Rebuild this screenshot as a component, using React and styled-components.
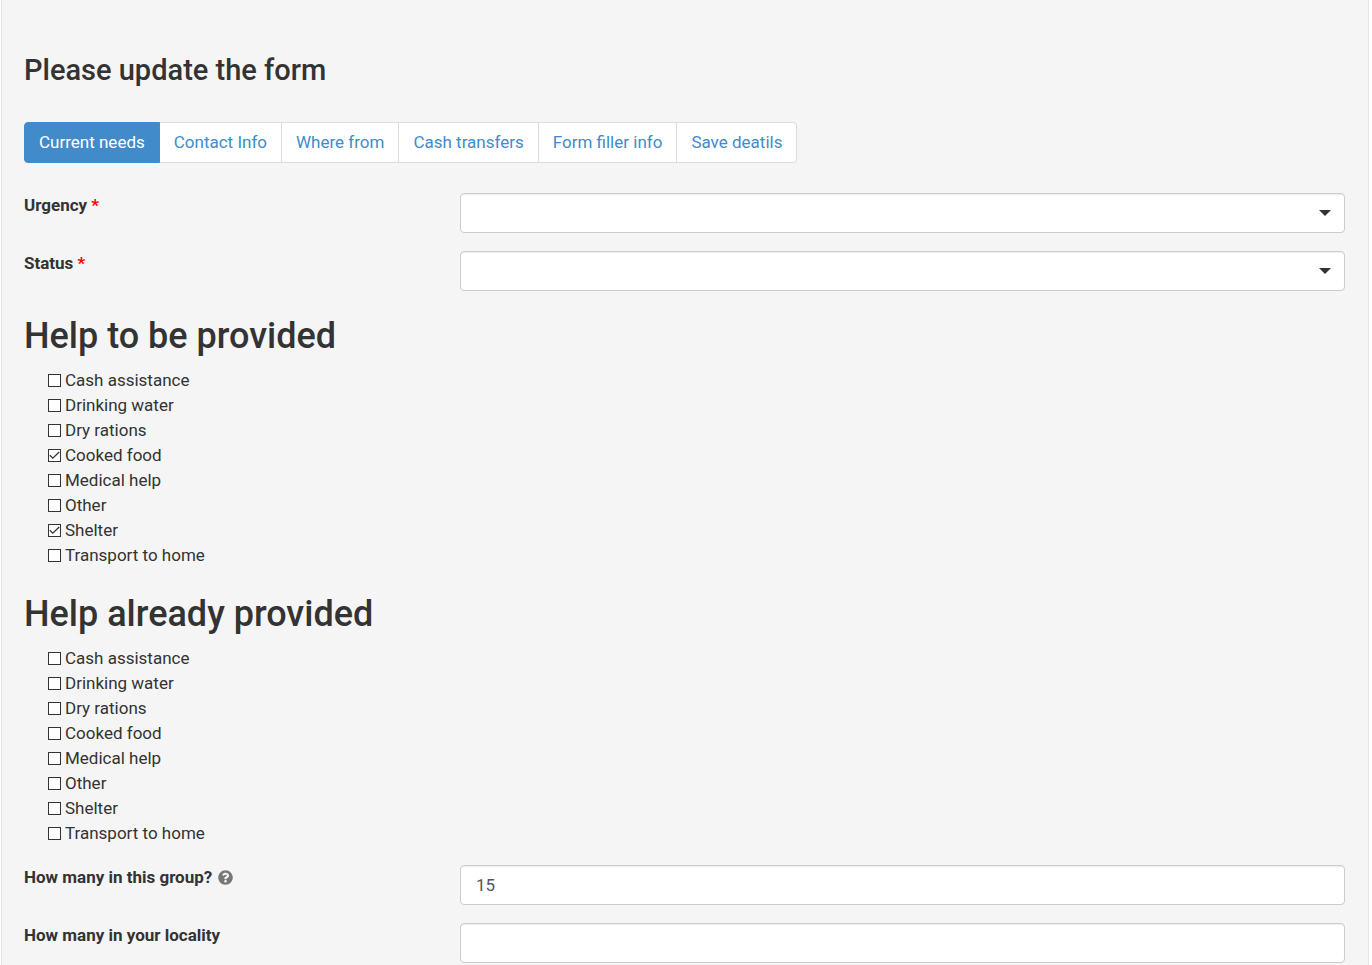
import React, { useState } from 'react';
import styled, { createGlobalStyle } from 'styled-components';
import { FaQuestionCircle } from 'react-icons/fa';

const GlobalStyle = createGlobalStyle`
  *, *::before, *::after { box-sizing: border-box; }
  body {
    margin: 0;
    background: #fff;
    color: #333;
    font-family: Roboto, "Liberation Sans", sans-serif;
    font-size: 17px;
    line-height: 25px;
  }
`;

const Panel = styled.main`
  min-height: 100vh;
  margin: 0 3px 0 1px;
  padding: 50px 23px 0 22px;
  background: #f5f5f5;
  border: solid #e3e3e3;
  border-width: 0 1px;
`;

const Title = styled.h2`
  margin: 0 0 32px;
  font-size: 29px;
  font-weight: 500;
  line-height: 40px;
`;

const SectionTitle = styled.h1`
  margin: 0 0 12px;
  font-size: 36px;
  font-weight: 500;
  line-height: 40px;
`;

const Tabs = styled.nav`
  display: flex;
  margin-bottom: 30px;
`;

const Tab = styled.a`
  padding: 7px 14px;
  border: 1px solid ${(p) => (p.$active ? '#428bca' : '#ddd')};
  background: ${(p) => (p.$active ? '#428bca' : '#fff')};
  color: ${(p) => (p.$active ? '#fff' : '#428bca')};
  text-decoration: none;

  & + & { border-left-width: 0; }
  &:first-child { border-radius: 4px 0 0 4px; }
  &:last-child { border-radius: 0 4px 4px 0; }
`;

const Field = styled.div`
  display: flex;
  align-items: flex-start;
  margin-bottom: 18px;
`;

const FieldLabel = styled.label`
  flex: 0 0 33%;
  font-weight: 700;
`;

const Required = styled.span`
  color: #f00;
`;

const HelpIcon = styled(FaQuestionCircle)`
  width: 15px;
  height: 15px;
  margin-left: 6px;
  color: #777;
  vertical-align: -2px;
`;

const Control = styled.div`
  position: relative;
  flex: 1;
`;

const Input = styled.input`
  display: block;
  width: 100%;
  height: 40px;
  padding: 6px 15px;
  border: 1px solid #ccc;
  border-radius: 4px;
  background: #fff;
  box-shadow: inset 0 1px 1px rgba(0, 0, 0, 0.075);
  color: #555;
  font: inherit;
  appearance: none;
`;

const Caret = styled.span`
  position: absolute;
  top: 17px;
  right: 14px;
  border: 6px solid transparent;
  border-top-color: #333;
  border-bottom-width: 0;
  pointer-events: none;
`;

const HelpGroup = styled.section`
  padding-top: 7px;
`;

const CheckList = styled.ul`
  margin: 0 0 19px;
  padding: 0 0 0 24px;
  list-style: none;
`;

const CheckLabel = styled.label`
  display: flex;
  align-items: center;
  gap: 4px;
`;

const CheckBox = styled.span`
  display: grid;
  width: 13px;
  height: 13px;

  input, svg { grid-area: 1 / 1; }
  input {
    width: 13px;
    height: 13px;
    margin: 0;
    border: 1px solid #333;
    background: #fff;
    appearance: none;
  }
  svg { display: none; pointer-events: none; }
  input:checked + svg { display: block; }
`;

const tabs = ['Current needs', 'Contact Info', 'Where from', 'Cash transfers', 'Form filler info', 'Save deatils'];
const helpTypes = [
  'Cash assistance', 'Drinking water', 'Dry rations', 'Cooked food',
  'Medical help', 'Other', 'Shelter', 'Transport to home',
];

function SelectField({ id, label }) {
  return (
    <Field>
      <FieldLabel htmlFor={id}>{label} <Required>*</Required></FieldLabel>
      <Control>
        <Input as="select" id={id} required defaultValue="">
          <option value="" />
        </Input>
        <Caret />
      </Control>
    </Field>
  );
}

function TextField({ id, label, help, value = '' }) {
  return (
    <Field>
      <FieldLabel htmlFor={id}>{label}{help && <HelpIcon aria-hidden="true" />}</FieldLabel>
      <Control><Input type="text" id={id} defaultValue={value} /></Control>
    </Field>
  );
}

function HelpSection({ title, checked = [] }) {
  return (
    <HelpGroup>
      <SectionTitle>{title}</SectionTitle>
      <CheckList>
        {helpTypes.map((name) => (
          <li key={name}>
            <CheckLabel>
              <CheckBox>
                <input type="checkbox" defaultChecked={checked.includes(name)} />
                <svg width="13" height="13" viewBox="0 0 13 13" fill="none" stroke="#333" strokeWidth="1.3">
                  <path d="M1.8 6.2 4.8 9.2l6.4-6.2" />
                </svg>
              </CheckBox>
              {name}
            </CheckLabel>
          </li>
        ))}
      </CheckList>
    </HelpGroup>
  );
}

export default function App() {
  const [active, setActive] = useState(0);
  return (
    <>
      <GlobalStyle />
      <Panel>
        <Title>Please update the form</Title>
        <Tabs>
          {tabs.map((name, i) => (
            <Tab key={name} href="#" $active={i === active} onClick={() => setActive(i)}>{name}</Tab>
          ))}
        </Tabs>
        <SelectField id="urgency" label="Urgency" />
        <SelectField id="status" label="Status" />
        <HelpSection title="Help to be provided" checked={['Cooked food', 'Shelter']} />
        <HelpSection title="Help already provided" />
        <TextField id="group" label="How many in this group?" help value="15" />
        <TextField id="locality" label="How many in your locality" />
      </Panel>
    </>
  );
}
